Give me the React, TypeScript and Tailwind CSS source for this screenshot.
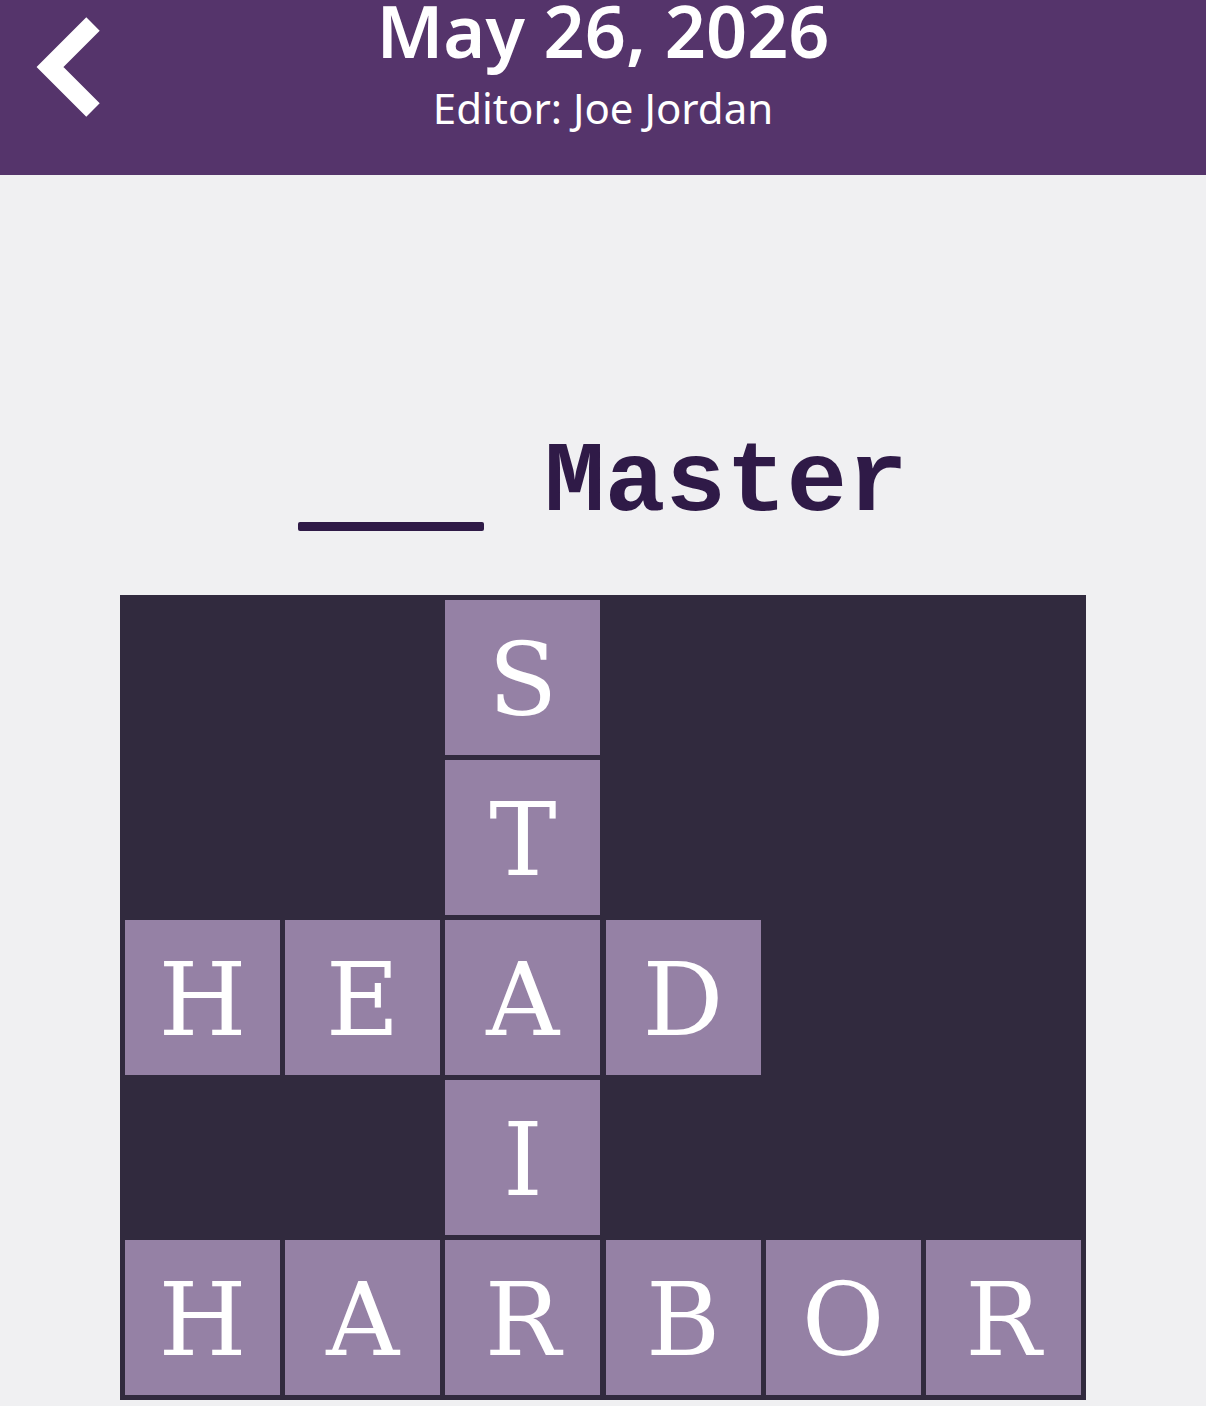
const rows: string[] = ["  S   ", "  T   ", "HEAD  ", "  I   ", "HARBOR"];

function BackChevron() {
  return (
    <svg width="110" height="136" viewBox="0 0 110 136" className="block">
      <polyline
        points="93,24 50,67 93,110"
        fill="none"
        stroke="white"
        strokeWidth="19"
        strokeLinejoin="miter"
        strokeLinecap="butt"
      />
    </svg>
  );
}

function Cell({ letter }: { letter: string }) {
  if (letter === " ") return <div className="h-[155px] w-[155px]" />;
  return (
    <div className="flex h-[155px] w-[155px] items-center justify-center bg-[#9581a5] pt-[6px] text-[101px] leading-none text-white [font-family:'DejaVu_Serif',serif]">
      {letter}
    </div>
  );
}

export default function App() {
  return (
    <div className="min-h-screen bg-[#f0f0f2]">
      <header className="grid h-[175px] grid-cols-[1fr_auto_1fr] bg-[#55346b] text-white">
        <div>
          <BackChevron />
        </div>
        <div className="flex flex-col items-center pt-[2px] [font-family:'Noto_Sans',sans-serif]">
          <h1 className="text-[72px] font-semibold leading-[56px]">May 26, 2026</h1>
          <p className="mt-[29px] text-[42px] leading-none">Editor: Joe Jordan</p>
        </div>
        <div />
      </header>

      <main className="pt-[258px] pb-[6px]">
        <div className="flex items-start justify-center gap-[60px] text-[#2f1a47]">
          <div className="mt-[89px] h-[9px] w-[186px] rounded-[2px] bg-[#2f1a47]" />
          <span className="text-[101px] font-bold leading-none [font-family:'Courier_New','Liberation_Mono',monospace]">
            Master
          </span>
        </div>

        <div className="mx-auto mt-[61px] grid w-[966px] grid-cols-6 gap-[5px] bg-[#312a3e] p-[5px]">
          {rows.map((row, r) =>
            row.split("").map((ch, c) => <Cell key={`${r}-${c}`} letter={ch} />)
          )}
        </div>
      </main>
    </div>
  );
}
